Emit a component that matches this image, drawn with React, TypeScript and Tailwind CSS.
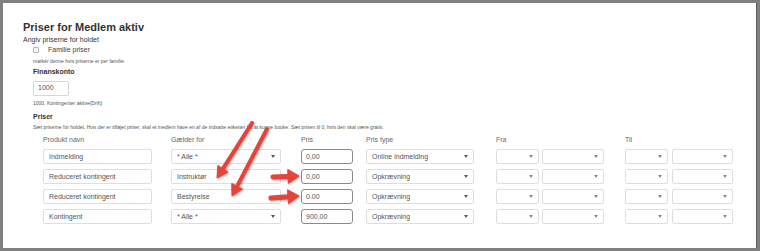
import React from "react";

const Caret = ({ light }: { light?: boolean }) => (
  <svg width="4" height="3" viewBox="0 0 4 3" className="shrink-0">
    <path d="M0 0H4L2 3Z" fill={light ? "#8a8a8a" : "#555"} />
  </svg>
);

function Arrow({ x1, y1, x2, y2, sw, L, W }: { x1: number; y1: number; x2: number; y2: number; sw: number; L: number; W: number }) {
  const dx = x2 - x1;
  const dy = y2 - y1;
  const len = Math.hypot(dx, dy);
  const ux = dx / len;
  const uy = dy / len;
  const nx = -uy;
  const ny = ux;
  const bx = x2 - ux * L;
  const by = y2 - uy * L;
  const pts = `${x2},${y2} ${bx + nx * W},${by + ny * W} ${bx - nx * W},${by - ny * W}`;
  return (
    <g>
      <line x1={x1} y1={y1} x2={bx + ux * 1} y2={by + uy * 1} stroke="#e5443b" strokeWidth={sw} strokeLinecap="round" />
      <polygon points={pts} fill="#e5443b" strokeLinejoin="round" stroke="#e5443b" strokeWidth={1} />
    </g>
  );
}

function Field({ cls, text, caret, dark, light }: { cls: string; text?: string; caret?: boolean; dark?: boolean; light?: boolean }) {
  return (
    <div
      className={`${cls} h-[15px] flex items-center justify-between bg-white ${
        dark ? "border border-[#8a8a8a] rounded-[3px] pl-[4px]" : "border border-[#dedede] rounded-[2px] pl-[5px]"
      } pr-[5px] text-[7px] leading-[13px] text-[#555] whitespace-nowrap overflow-hidden`}
    >
      <span>{text ?? ""}</span>
      {caret ? <Caret light={light} /> : null}
    </div>
  );
}

const rows = [
  { name: "Indmelding", for: "* Alle *", forCaret: true, pris: "0,00", type: "Online indmelding" },
  { name: "Reduceret kontingent", for: "Instruktør", forCaret: false, pris: "0,00", type: "Opkrævning" },
  { name: "Reduceret kontingent", for: "Bestyrelse", forCaret: false, pris: "0.00", type: "Opkrævning" },
  { name: "Kontingent", for: "* Alle *", forCaret: true, pris: "900,00", type: "Opkrævning" },
];

export default function App() {
  return (
    <div className="relative w-[760px] h-[251px] bg-[#808080] pt-[3px] pl-[3px] font-['Liberation_Sans',Arial,sans-serif] overflow-hidden">
      <div className="w-[753px] h-[245px] bg-white shadow-[1px_0_0_#5f5f5f] pt-[18px] pl-[20px]">
        <div className="h-[12px] leading-[12px] text-[11px] font-bold text-[#333]">Priser for Medlem aktiv</div>
        <div className="mt-[3px] h-[8px] leading-[8px] text-[7px] text-[#333]">Angiv priserne for holdet</div>
        <div className="ml-[10px]">
          <div className="mt-[2px] h-[8px] flex items-center">
            <div className="w-[6px] h-[6px] border border-[#b5b5b5] rounded-[1px] bg-[#f4f4f4]" />
            <span className="ml-[9px] text-[7px] leading-[8px] text-[#444]">Familie priser</span>
          </div>
          <div className="mt-[4px] h-[6px] leading-[6px] text-[5px] text-[#555]">markér denne hvis priserne er per familie.</div>
          <div className="mt-[4px] h-[8px] leading-[8px] text-[7px] font-bold text-[#333]">Finanskonto</div>
          <div className="mt-[5px] w-[36px] h-[15px] border border-[#d6d6d6] rounded-[2px] pl-[4px] flex items-center text-[7px] text-[#555]">1000</div>
          <div className="mt-[4px] h-[6px] leading-[6px] text-[5px] text-[#555]">1000, Kontingenter aktive(Drift)</div>
          <div className="mt-[7px] h-[8px] leading-[8px] text-[7px] font-bold text-[#333]">Priser</div>
          <div className="mt-[3px] h-[6px] leading-[6px] text-[5px] text-[#555] whitespace-nowrap">
            Sæt priserne for holdet. Hvis der er tilføjet priser, skal et medlem have en af de indsatte etiketter for at kunne booke. Sæt prisen til 0, hvis den skal være gratis.
          </div>
          <div className="ml-[10px]">
            <div className="mt-[6px] h-[8px] grid grid-cols-[128px_130px_65px_130px_129px_129px] text-[7px] leading-[8px] text-[#666]">
              <div>Produkt navn</div>
              <div>Gælder for</div>
              <div>Pris</div>
              <div>Pris type</div>
              <div>Fra</div>
              <div>Til</div>
            </div>
            <div className="mt-[5px] flex flex-col gap-[5px]">
              {rows.map((r, i) => (
                <div key={i} className="grid grid-cols-[128px_130px_65px_130px_129px_129px]">
                  <Field cls="w-[109px]" text={r.name} />
                  <Field cls="w-[110px]" text={r.for} caret={r.forCaret} />
                  <Field cls="w-[52px]" text={r.pris} dark />
                  <Field cls="w-[108px]" text={r.type} caret />
                  <div className="flex gap-[3px]">
                    <Field cls="w-[43px]" caret light />
                    <Field cls="w-[62px]" caret light />
                  </div>
                  <div className="flex gap-[4px]">
                    <Field cls="w-[43px]" caret light />
                    <Field cls="w-[61px]" caret light />
                  </div>
                </div>
              ))}
            </div>
          </div>
        </div>
      </div>
      <svg
        className="absolute left-0 top-0 pointer-events-none"
        width="760"
        height="251"
        viewBox="0 0 760 251"
        style={{ filter: "drop-shadow(1px 1px 1px rgba(0,0,0,0.35))" }}
      >
        <Arrow x1={252} y1={123} x2={217} y2={178} sw={4} L={11} W={6} />
        <Arrow x1={267} y1={129} x2={232} y2={196} sw={4} L={11} W={6} />
        <Arrow x1={273} y1={177} x2={299} y2={176} sw={5} L={11} W={7} />
        <Arrow x1={271} y1={198} x2={299} y2={196} sw={5} L={11} W={7} />
      </svg>
    </div>
  );
}
